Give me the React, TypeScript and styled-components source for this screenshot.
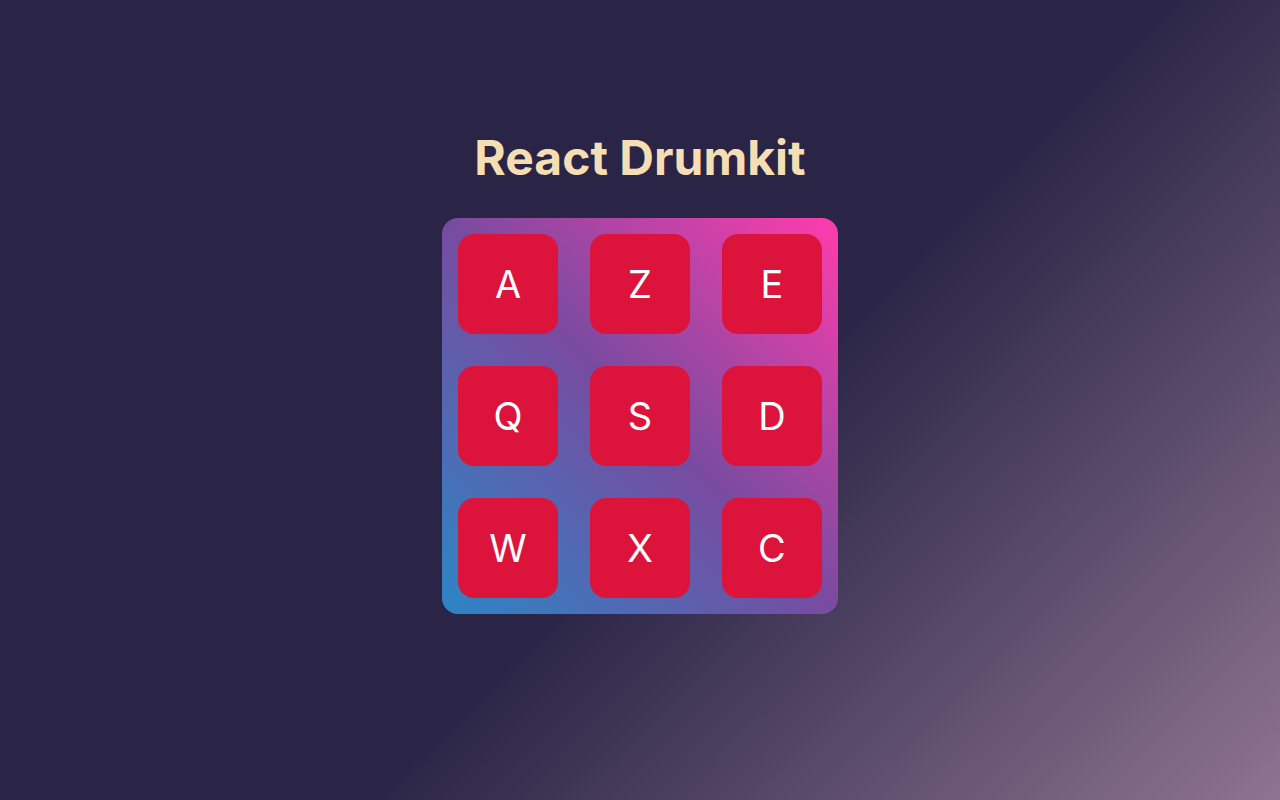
import React from "react";
import styled, { createGlobalStyle } from "styled-components";

const GlobalStyle = createGlobalStyle`
  html, body {
    margin: 0;
    padding: 0;
  }
  body {
    font-family: Inter, "Noto Sans", sans-serif;
    background: #2a2546;
  }
`;

const Page = styled.main`
  min-height: 100vh;
  box-sizing: border-box;
  display: flex;
  flex-direction: column;
  align-items: center;
  padding-top: 129px;
  gap: 31px;
  background: linear-gradient(135deg, #2a2546 0%, #2a2546 56%, #8e7490 100%);
`;

const Title = styled.h1`
  margin: 0;
  font-family: Inter, sans-serif;
  font-size: 48px;
  line-height: 58px;
  font-weight: 700;
  color: #f5deb3;
`;

const Pad = styled.div`
  display: grid;
  grid-template-columns: repeat(3, 100px);
  gap: 32px;
  padding: 16px;
  border-radius: 16px;
  background: linear-gradient(225deg, #ff3cac 0%, #784ba0 50%, #2b86c5 100%);
`;

const DrumKey = styled.button`
  width: 100px;
  height: 100px;
  border: none;
  border-radius: 16px;
  background: #dc143c;
  color: #ffffff;
  font-family: Inter, sans-serif;
  font-size: 38px;
  font-weight: 400;
  display: flex;
  align-items: center;
  justify-content: center;
  padding: 0;
  cursor: pointer;
`;

const keys = ["A", "Z", "E", "Q", "S", "D", "W", "X", "C"];

export default function App() {
  return (
    <>
      <GlobalStyle />
      <Page>
        <Title>React Drumkit</Title>
        <Pad>
          {keys.map((k) => (
            <DrumKey key={k}>{k}</DrumKey>
          ))}
        </Pad>
      </Page>
    </>
  );
}
